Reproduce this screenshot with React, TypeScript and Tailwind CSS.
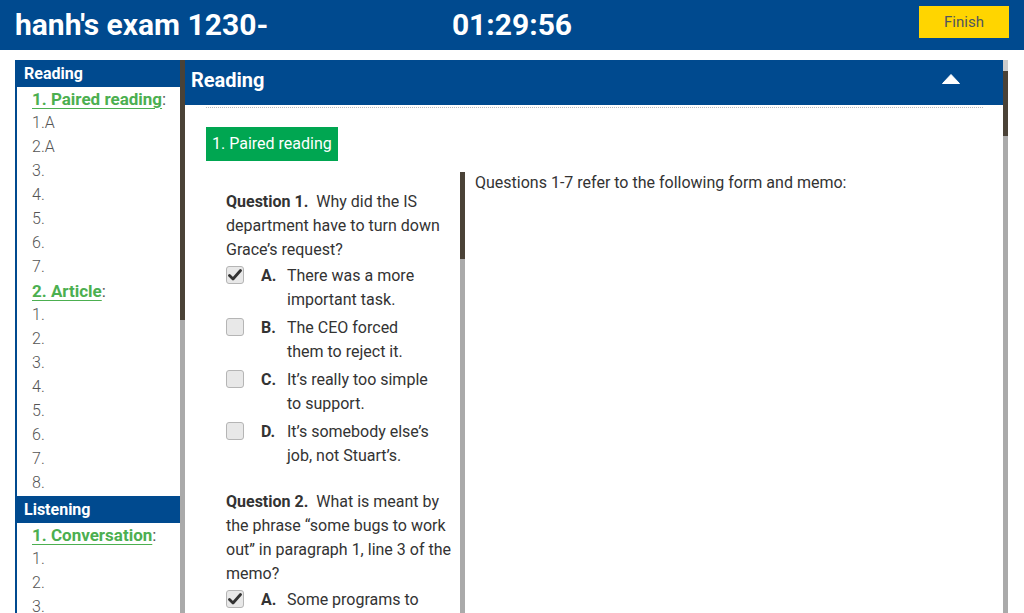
import React from "react";

const Check = () => (
  <svg width="14" height="12" viewBox="0 0 14 12" className="block">
    <path d="M1.5 6.5 L5 10 L12.5 1.5" fill="none" stroke="#333" strokeWidth="2.8" strokeLinecap="round" strokeLinejoin="round" />
  </svg>
);

const Box = ({ checked }: { checked?: boolean }) => (
  <div className="mt-[2px] w-[18px] h-[18px] shrink-0 rounded-[3px] border border-[#b5b5b5] bg-[#e8e8e8] flex items-center justify-center">
    {checked && <Check />}
  </div>
);

const Option = ({ letter, text, checked }: { letter: string; text: string; checked?: boolean }) => (
  <div className="flex items-start mb-[4px]">
    <Box checked={checked} />
    <span className="ml-[17px] w-[26px] shrink-0 font-bold">{letter}</span>
    <span className="w-[146px]">{text}</span>
  </div>
);

const SideItem = ({ children }: { children: React.ReactNode }) => (
  <div className="h-[24px] leading-[24px] pl-[15px] text-[16px] font-light text-[#555]">{children}</div>
);

const SideGroup = ({ title }: { title: string }) => (
  <div className="h-[24px] leading-[24px] pl-[15px] text-[17px] text-[#555]">
    <span className="font-bold text-[#4caf50] underline underline-offset-[3px]">{title}</span>:
  </div>
);

const SideHead = ({ title }: { title: string }) => (
  <div className="h-[27px] leading-[27px] bg-[#004a8f] text-white font-bold text-[16px] pl-[7px]">{title}</div>
);

export default function App() {
  return (
    <div className="w-[1024px] h-[613px] overflow-hidden bg-white font-['Roboto',sans-serif] text-[#333]">
      <header className="h-[50px] bg-[#004a8f] grid grid-cols-[1fr_auto_1fr] items-center px-[15px]">
        <div className="text-white font-bold text-[30px] leading-none">hanh's exam 1230-</div>
        <div className="text-white font-bold text-[30px] leading-none">01:29:56</div>
        <div className="flex justify-end">
          <button className="w-[90px] h-[32px] bg-[#ffd500] text-[#4f5560] text-[15px] -mt-[6px]">Finish</button>
        </div>
      </header>

      <div className="flex pt-[10px] pl-[15px]">
        {/* sidebar */}
        <div className="w-[165px] h-[553px] border-l-2 border-[#004a8f] overflow-hidden">
          <SideHead title="Reading" />
          <SideGroup title="1. Paired reading" />
          {["1.A", "2.A", "3.", "4.", "5.", "6.", "7."].map((t) => (
            <SideItem key={t}>{t}</SideItem>
          ))}
          <SideGroup title="2. Article" />
          {["1.", "2.", "3.", "4.", "5.", "6.", "7.", "8."].map((t) => (
            <SideItem key={t}>{t}</SideItem>
          ))}
          <div className="h-[1px]" />
          <SideHead title="Listening" />
          <SideGroup title="1. Conversation" />
          {["1.", "2.", "3.", "4."].map((t) => (
            <SideItem key={t}>{t}</SideItem>
          ))}
        </div>
        <div className="w-[5px] h-[553px] flex flex-col">
          <div className="h-[260px] bg-[#4a4237]" />
          <div className="flex-1 bg-[#aaaaaa]" />
        </div>

        {/* main */}
        <div className="w-[818px] h-[553px] overflow-hidden">
          <div className="h-[45px] bg-[#004a8f] flex items-start justify-between pl-[6px] pr-[43px] pt-[8px]">
            <span className="text-white font-bold text-[20px] leading-[24px]">Reading</span>
            <svg width="18" height="10" viewBox="0 0 18 10" className="mt-[6px]">
              <path d="M9 0.5 L17.5 9.5 L0.5 9.5 Z" fill="#fff" strokeLinejoin="round" stroke="#fff" strokeWidth="1" />
            </svg>
          </div>
          <div className="pl-[21px] pr-[20px]">
            <div className="mt-[2px] border-t border-dotted border-[#bbb]" />
            <div className="mt-[19px] inline-block bg-[#00a651] text-white text-[16px] h-[34px] leading-[34px] px-[6px]">
              1. Paired reading
            </div>
            <div className="mt-[11px] flex text-[16px] leading-[24px]">
              <div className="w-[254px] shrink-0 pl-[20px] pr-[4px] pt-[18px]">
                <div className="mb-[2px]">
                  <b>Question 1.</b>&nbsp; Why did the IS department have to turn down Grace’s request?
                </div>
                <Option letter="A." text="There was a more important task." checked />
                <Option letter="B." text="The CEO forced them to reject it." />
                <Option letter="C." text="It’s really too simple to support." />
                <Option letter="D." text="It’s somebody else’s job, not Stuart’s." />
                <div className="mt-[22px] mb-[2px]">
                  <b>Question 2.</b>&nbsp; What is meant by the phrase “some bugs to work out” in paragraph 1, line 3 of the memo?
                </div>
                <Option letter="A." text="Some programs to be fixed." checked />
              </div>
              <div className="w-[5px] h-[460px] flex flex-col shrink-0">
                <div className="h-[87px] bg-[#4a4237]" />
                <div className="flex-1 bg-[#aaaaaa]" />
              </div>
              <div className="pl-[10px] leading-[22px]">Questions 1-7 refer to the following form and memo:</div>
            </div>
          </div>
        </div>
        <div className="w-[5px] h-[553px] flex flex-col">
          <div className="h-[11px] bg-[#cccccc]" />
          <div className="h-[65px] bg-[#4a4237]" />
          <div className="flex-1 bg-[#aaaaaa]" />
        </div>
      </div>
    </div>
  );
}
